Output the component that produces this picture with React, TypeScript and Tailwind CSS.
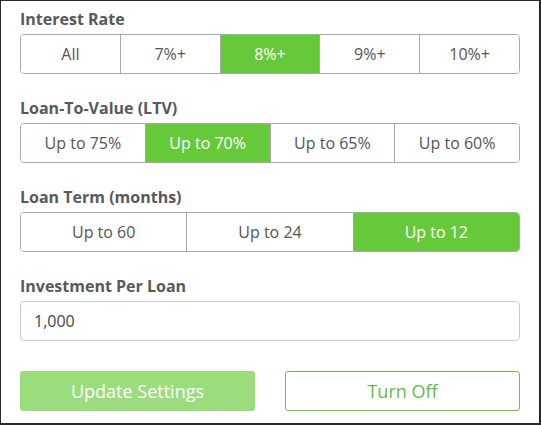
import React from "react";

function Group({ options, selected }: { options: string[]; selected: number }) {
  return (
    <div className="flex h-[40px] w-[500px] rounded-[4px] border border-[#a9a9a9] overflow-hidden">
      {options.map((o, i) => (
        <div
          key={o}
          className={
            "flex flex-1 items-center justify-center text-[16px] " +
            (i > 0 ? "border-l border-[#a9a9a9] " : "") +
            (i === selected ? "bg-[#66c93a] text-white" : "bg-white text-[#555555]")
          }
        >
          {o}
        </div>
      ))}
    </div>
  );
}

function Label({ children }: { children: React.ReactNode }) {
  return <div className="h-[20px] mb-[5px] text-[16px] leading-[20px] font-bold text-[#58595b]">{children}</div>;
}

export default function App() {
  return (
    <div
      className="w-[541px] h-[425px] bg-white border-l border-t border-r-2 border-b-2 border-[#2a2a2a] pl-[19px] pt-[8px]"
      style={{ fontFamily: '"Open Sans", sans-serif' }}
    >
      <Label>Interest Rate</Label>
      <Group options={["All", "7%+", "8%+", "9%+", "10%+"]} selected={2} />
      <div className="h-[24px]" />
      <Label>Loan-To-Value (LTV)</Label>
      <Group options={["Up to 75%", "Up to 70%", "Up to 65%", "Up to 60%"]} selected={1} />
      <div className="h-[24px]" />
      <Label>Loan Term (months)</Label>
      <Group options={["Up to 60", "Up to 24", "Up to 12"]} selected={2} />
      <div className="h-[24px]" />
      <Label>Investment Per Loan</Label>
      <div className="flex h-[40px] w-[500px] items-center rounded-[4px] border border-[#cccccc] pl-[13px] text-[16px] text-[#444444]">
        1,000
      </div>
      <div className="mt-[30px] flex w-[500px] gap-[30px]">
        <div className="flex h-[40px] w-[235px] items-center justify-center rounded-[3px] bg-[#9bdc7c] text-[18px] text-white">
          Update Settings
        </div>
        <div className="flex h-[40px] w-[235px] items-center justify-center rounded-[3px] border border-[#6cc24a] text-[18px] text-[#66bb44]">
          Turn Off
        </div>
      </div>
    </div>
  );
}
